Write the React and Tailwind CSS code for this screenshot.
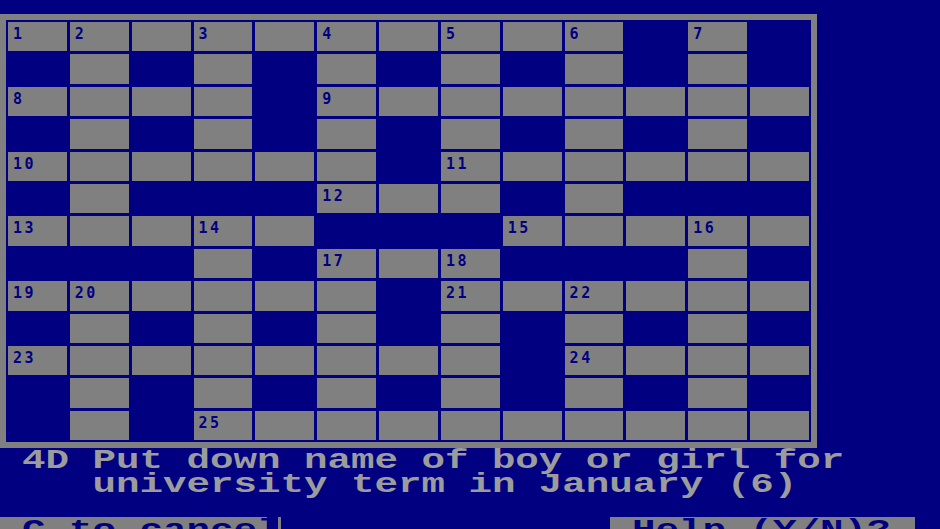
const rows = [
  "WWWWWWWWWWBWB",
  "BWBWBWBWBWBWB",
  "WWWWBWWWWWWWW",
  "BWBWBWBWBWBWB",
  "WWWWWWBWWWWWW",
  "BWBBBWWWBWBBB",
  "WWWWWBBBWWWWW",
  "BBBWBWWWBBBWB",
  "WWWWWWBWWWWWW",
  "BWBWBWBWBWBWB",
  "WWWWWWWWBWWWW",
  "BWBWBWBWBWBWB",
  "BWBWWWWWWWWWW",
];

const numbers = {
  "0-0": 1, "0-1": 2, "0-3": 3, "0-5": 4, "0-7": 5, "0-9": 6, "0-11": 7,
  "2-0": 8, "2-5": 9, "4-0": 10, "4-7": 11, "5-5": 12,
  "6-0": 13, "6-3": 14, "6-8": 15, "6-11": 16,
  "7-5": 17, "7-7": 18,
  "8-0": 19, "8-1": 20, "8-7": 21, "8-9": 22,
  "10-0": 23, "10-9": 24, "12-3": 25,
};

const retro = { fontFamily: '"Liberation Mono", "Courier New", monospace' };
const digits = { fontFamily: '"DejaVu Sans Mono", monospace' };

function Cell({ r, c, open }) {
  const n = numbers[`${r}-${c}`];
  if (!open) return <div className="bg-[#000080]" />;
  return (
    <div className="bg-[#808080] pl-[5px] pt-[5px]">
      {n && (
        <span className="block text-[15px] font-bold leading-none tracking-[2.5px] text-[#000080]" style={digits}>
          {n}
        </span>
      )}
    </div>
  );
}

export default function App() {
  return (
    <main className="relative h-[529px] w-[940px] overflow-hidden bg-[#000080]">
      <div className="mt-[14px] w-[817px] bg-[#808080] p-[6px]">
        <div className="bg-[#000080] p-[2px]">
          <div className="grid grid-cols-13 auto-rows-[29.4px] gap-[3px]">
            {rows.map((row, r) =>
              row.split("").map((ch, c) => <Cell key={`${r}-${c}`} r={r} c={c} open={ch === "W"} />)
            )}
          </div>
        </div>
      </div>

      <div className="mt-[2px] pl-[22px]">
        <div
          className="origin-left scale-x-[1.45] whitespace-pre text-[27px] font-bold leading-[23.5px] text-[#9c9c9c]"
          style={retro}
        >
          {"4D Put down name of boy or girl for\n   university term in January (6)"}
        </div>
      </div>

      <div className="mt-[20px] flex items-start">
        <div className="h-[20px] w-[267px] shrink-0 overflow-hidden bg-[#808080] pl-[22px] pt-[3px]">
          <div
            className="origin-left scale-x-[1.45] whitespace-pre text-[27px] font-bold leading-[23.5px] text-[#000080]"
            style={retro}
          >
            C to cancel
          </div>
        </div>
        <span className="ml-[11px] h-[20px] w-[3px] bg-[#808080]" />
        <div className="ml-[329px] h-[20px] w-[305px] shrink-0 overflow-hidden bg-[#808080] pl-[22px] pt-[3px]">
          <div
            className="origin-left scale-x-[1.45] whitespace-pre text-[27px] font-bold leading-[23.5px] text-[#000080]"
            style={retro}
          >
            Help (Y/N)?
          </div>
        </div>
      </div>
    </main>
  );
}
